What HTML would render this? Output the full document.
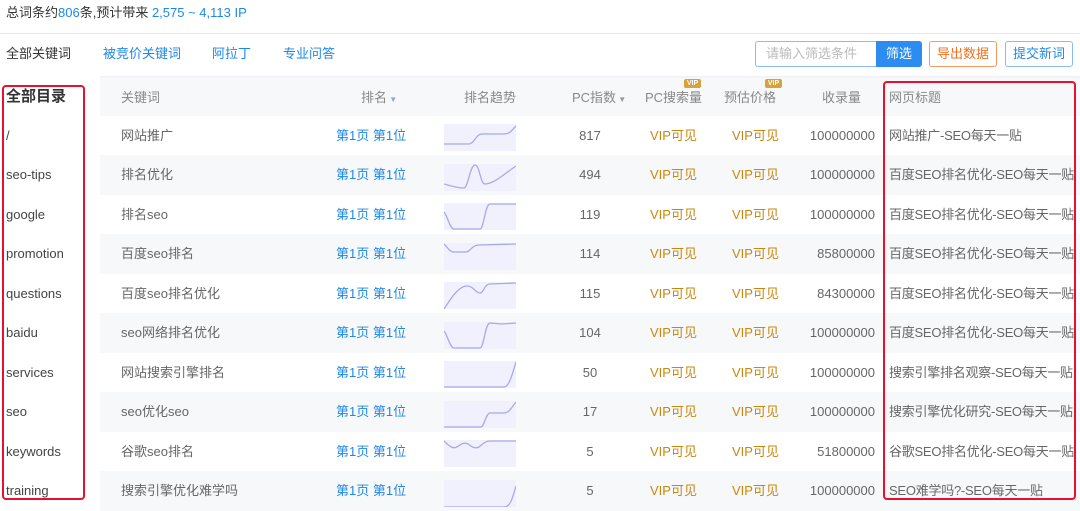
<!DOCTYPE html>
<html><head><meta charset="utf-8"><style>
*{margin:0;padding:0;box-sizing:border-box}
body{width:1080px;height:502px;overflow:hidden;background:#fff;font-family:"Liberation Sans","Noto Sans CJK SC",sans-serif;font-size:13px;color:#333;position:relative}
.a{position:absolute;white-space:nowrap;line-height:16px}
.blue{color:#1e88e5}
.g{color:#666}
.vip{color:#c8870e}
.row{position:absolute;left:100px;width:980px;height:40px}
.grey{background:#f7f8fa}
.btn{position:absolute;top:41px;height:26px;border-radius:3px;font-size:13px;line-height:24px;text-align:center}
.badge{position:absolute;width:17px;height:9px;background:#d9a23a;border-radius:2px;color:#fff;font-size:7px;line-height:9px;text-align:center;font-weight:bold}
</style></head><body>
<div class="a" style="left:6px;top:5px;">总词条约<span class="blue">806</span>条,预计带来 <span class="blue">2,575 ~ 4,113 IP</span></div>
<div class="a" style="left:0;top:33px;width:1080px;height:1px;background:#e6e6e6"></div>
<div class="a" style="left:6px;top:46px;color:#333">全部关键词</div>
<div class="a blue" style="left:103px;top:46px">被竞价关键词</div>
<div class="a blue" style="left:212px;top:46px">阿拉丁</div>
<div class="a blue" style="left:283px;top:46px">专业问答</div>
<div class="btn" style="left:755px;width:122px;border:1px solid #8bbcf0;border-right:none;border-radius:3px 0 0 3px;color:#bbb;text-align:left;padding-left:10px">请输入筛选条件</div>
<div class="btn" style="left:876px;width:46px;background:#2d8cf0;color:#fff;border-radius:0 3px 3px 0;line-height:26px">筛选</div>
<div class="btn" style="left:929px;width:68px;border:1px solid #f39a5c;color:#f07020">导出数据</div>
<div class="btn" style="left:1005px;width:68px;border:1px solid #8bbcf0;color:#1e88e5">提交新词</div>

<div class="row grey" style="top:76px;height:40px;box-shadow:inset 0 2px 2px -1px #eceef2"></div>
<div class="row grey" style="top:155px"></div>
<div class="row grey" style="top:234px"></div>
<div class="row grey" style="top:313px"></div>
<div class="row grey" style="top:392px"></div>
<div class="row grey" style="top:471px"></div>

<div class="a" style="left:6px;top:88px;font-size:15px;line-height:18px;font-weight:bold;color:#333">全部目录</div>
<div class="a" style="left:121px;top:90px;color:#888">关键词</div>
<div class="a" style="left:361px;top:90px;color:#888">排名<span style="font-size:8px;color:#8fa6c8"> ▼</span></div>
<div class="a" style="left:464px;top:90px;color:#888">排名趋势</div>
<div class="a" style="left:572px;top:90px;color:#888">PC指数<span style="font-size:8px;color:#999"> ▼</span></div>
<div class="a" style="left:645px;top:90px;color:#888">PC搜索量</div>
<div class="a" style="left:724px;top:90px;color:#888">预估价格</div>
<div class="a" style="left:822px;top:90px;color:#888">收录量</div>
<div class="a" style="left:889px;top:90px;color:#888">网页标题</div>
<div class="badge" style="left:684px;top:79px">VIP</div>
<div class="badge" style="left:765px;top:79px">VIP</div>

<div id="rows"></div>
<div class="a" style="left:2px;top:85px;width:83px;height:415px;border:2px solid #e8102e;border-radius:4px"></div>
<div class="a" style="left:883px;top:81px;width:193px;height:419px;border:2px solid #e8102e;border-radius:4px"></div>
<script>
var d=[["/","网站推广","817","100000000","网站推广-SEO每天一贴","M0 20 L25 20 C30 20 32 10 38 10 L60 10 C66 10 68 6 72 2"],
["seo-tips","排名优化","494","100000000","百度SEO排名优化-SEO每天一贴","M0 20 C10 23 15 24 20 24 C24 24 26 1 31 1 C36 1 36 20 41 20 C50 20 60 10 72 2"],
["google","排名seo","119","100000000","百度SEO排名优化-SEO每天一贴","M0 9 C4 14 6 26 10 26 L36 26 C40 26 41 1 46 1 L72 1"],
["promotion","百度seo排名","114","85800000","百度SEO排名优化-SEO每天一贴","M0 1 C4 5 6 9 10 9 L22 9 C26 9 28 2 35 2 L72 1"],
["questions","百度seo排名优化","115","84300000","百度SEO排名优化-SEO每天一贴","M0 27 C6 18 14 4 23 4 C30 4 31 11 36 11 C40 11 40 2 46 2 L72 1"],
["baidu","seo网络排名优化","104","100000000","百度SEO排名优化-SEO每天一贴","M0 9 C4 14 6 26 10 26 L36 26 C40 26 41 1 46 1 L58 2 L72 1"],
["services","网站搜索引擎排名","50","100000000","搜索引擎排名观察-SEO每天一贴","M0 26 L60 26 C65 26 68 14 72 1"],
["seo","seo优化seo","17","100000000","搜索引擎优化研究-SEO每天一贴","M0 26 L37 26 C40 26 42 12 46 12 L60 12 C65 12 68 6 72 1"],
["keywords","谷歌seo排名","5","51800000","谷歌SEO排名优化-SEO每天一贴","M0 1 C6 7 9 9 13 7 C17 4 20 2 24 4 C28 7 31 9 35 7 C39 4 41 1 46 1 L72 1"],
["training","搜索引擎优化难学吗","5","100000000","SEO难学吗?-SEO每天一贴","M0 27 L60 27 C66 27 68 20 72 6"]];
var h="";
for(var i=0;i<d.length;i++){var r=d[i],t=116+i*39.5,y=t+11.5;
h+='<div class="a g" style="left:6px;top:'+y+'px;color:#444">'+r[0]+'</div>';
h+='<div class="a g" style="left:121px;top:'+y+'px">'+r[1]+'</div>';
h+='<div class="a blue" style="left:336px;top:'+y+'px">第1页 第1位</div>';
h+='<svg class="a" style="left:444px;top:'+(t+8)+'px" width="72" height="27" viewBox="0 0 72 27"><rect width="72" height="27" fill="#f1f1fd"/><path d="'+r[5]+'" fill="none" stroke="#a8a8ec" stroke-width="1.3"/></svg>';
h+='<div class="a g" style="left:560px;width:60px;text-align:center;top:'+y+'px">'+r[2]+'</div>';
h+='<div class="a vip" style="left:650px;top:'+y+'px">VIP可见</div>';
h+='<div class="a vip" style="left:732px;top:'+y+'px">VIP可见</div>';
h+='<div class="a g" style="left:790px;width:85px;text-align:right;top:'+y+'px">'+r[3]+'</div>';
h+='<div class="a g" style="left:889px;top:'+y+'px;letter-spacing:-0.25px">'+r[4]+'</div>';}
document.getElementById("rows").innerHTML=h;
</script>
</body></html>
